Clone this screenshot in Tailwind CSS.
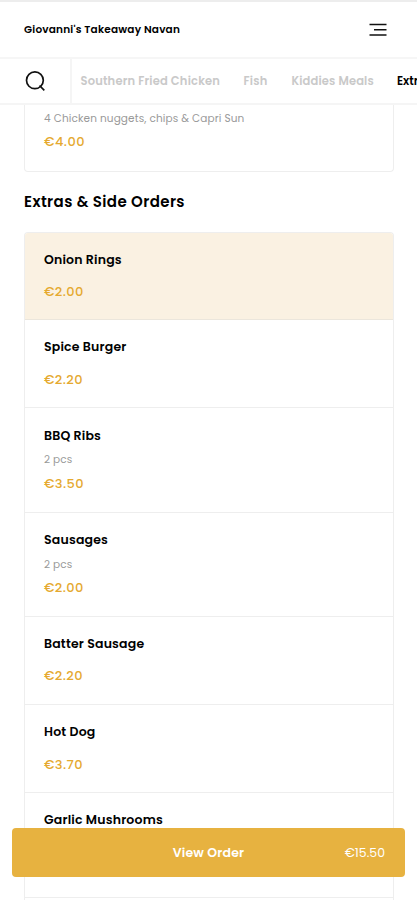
<!DOCTYPE html>
<html lang="en">
<head>
<meta charset="utf-8">
<meta name="viewport" content="width=device-width, initial-scale=1">
<title>Giovanni's Takeaway Navan</title>
<script src="https://cdn.jsdelivr.net/npm/@tailwindcss/browser@4"></script>
</head>
<body class="h-[900px] overflow-hidden bg-white font-[Poppins,Inter,sans-serif] text-black">
<div class="flex h-[900px] flex-col overflow-hidden">
  <header class="flex h-[59px] shrink-0 items-center justify-between border-t-2 border-b-2 border-t-[#ededed] border-b-[#f6f6f6] pr-[30px] pl-6">
    <h1 class="text-[10.5px] leading-4 font-semibold tracking-[0.2px] whitespace-nowrap"><span>Giovanni's Takeaway Navan</span></h1>
    <svg class="h-[14px] w-[18px]" viewBox="0 0 18 14" fill="none" stroke="#111" stroke-width="1.6"><path d="M0.5 1.5H17.5M5 6.8H17.5M0.5 12H17.5"/></svg>
  </header>
  <nav class="flex h-[46px] shrink-0 border-b-2 border-[#f5f5f5]">
    <div class="flex w-[72px] shrink-0 items-center border-r-2 border-[#f5f5f5] pl-[25px]">
      <svg class="h-5 w-5" viewBox="0 0 20 20" fill="none" stroke="#111" stroke-width="1.7"><circle cx="9.9" cy="9.3" r="8.4"/><path d="M14.5 14.5L19.3 19.3"/></svg>
    </div>
    <div class="flex min-w-0 flex-1 items-center overflow-hidden pt-[2px] pl-[8.5px] text-[11.5px] font-semibold whitespace-nowrap text-[#c9c9c9]">
      <a class="w-[163px] shrink-0 tracking-[0.18px]">Southern Fried Chicken</a>
      <a class="w-12 shrink-0 tracking-[0.2px]">Fish</a>
      <a class="w-[105.5px] shrink-0 tracking-[0.15px]">Kiddies Meals</a>
      <a class="shrink-0 text-black">Extras &amp; Side Orders</a>
    </div>
  </nav>
  <main class="shrink-0 px-6">
    <section class="h-[67px] w-[370px] rounded-b-[4px] border border-t-0 border-[#eeeeee] pt-[6px] pl-[19px]">
      <p class="text-[10.5px] leading-4 tracking-[0.13px] text-[#999]"><span>4 Chicken nuggets, chips &amp; Capri Sun</span></p>
      <p class="mt-[5px] text-[13px] leading-5 font-medium tracking-[0.5px] text-[#e5a92f]"><span>€4.00</span></p>
    </section>
    <h2 class="mt-[18px] text-[15px] leading-6 font-semibold tracking-[0.4px]"><span>Extras &amp; Side Orders</span></h2>
    <ul class="mt-[18px] w-[370px] rounded-t-[4px] border border-b-0 border-[#eeeeee]">
      <li class="h-[87px] rounded-t-[3px] border-b border-[#ebe6dc] bg-[#faf1e2] pt-[17px] pl-[19px]">
        <h3 class="text-[12.5px] leading-5 font-semibold tracking-[0.18px]"><span>Onion Rings</span></h3>
        <p class="mt-3 text-[13px] leading-5 font-medium tracking-[0.4px] text-[#e5a92f]"><span>€2.00</span></p>
      </li>
      <li class="h-[88px] border-b border-[#eeeeee] pt-[17px] pl-[19px]">
        <h3 class="text-[12.5px] leading-5 font-semibold tracking-[0.18px]"><span>Spice Burger</span></h3>
        <p class="mt-[13px] text-[13px] leading-5 font-medium tracking-[0.4px] text-[#e5a92f]"><span>€2.20</span></p>
      </li>
      <li class="h-[105px] border-b border-[#eeeeee] pt-[18px] pl-[19px]">
        <h3 class="text-[12.5px] leading-5 font-semibold tracking-[0.18px]"><span>BBQ Ribs</span></h3>
        <p class="mt-[6px] text-[10.5px] leading-4 tracking-[0.13px] text-[#999]"><span>2 pcs</span></p>
        <p class="mt-[6px] text-[13px] leading-5 font-medium tracking-[0.4px] text-[#e5a92f]"><span>€3.50</span></p>
      </li>
      <li class="h-[104px] border-b border-[#eeeeee] pt-[17px] pl-[19px]">
        <h3 class="text-[12.5px] leading-5 font-semibold tracking-[0.18px]"><span>Sausages</span></h3>
        <p class="mt-[7px] text-[10.5px] leading-4 tracking-[0.13px] text-[#999]"><span>2 pcs</span></p>
        <p class="mt-[5px] text-[13px] leading-5 font-medium tracking-[0.4px] text-[#e5a92f]"><span>€2.00</span></p>
      </li>
      <li class="h-[88px] border-b border-[#eeeeee] pt-[17px] pl-[19px]">
        <h3 class="text-[12.5px] leading-5 font-semibold tracking-[0.18px]"><span>Batter Sausage</span></h3>
        <p class="mt-3 text-[13px] leading-5 font-medium tracking-[0.4px] text-[#e5a92f]"><span>€2.20</span></p>
      </li>
      <li class="h-[88px] border-b border-[#eeeeee] pt-[17px] pl-[19px]">
        <h3 class="text-[12.5px] leading-5 font-semibold tracking-[0.18px]"><span>Hot Dog</span></h3>
        <p class="mt-[13px] text-[13px] leading-5 font-medium tracking-[0.4px] text-[#e5a92f]"><span>€3.70</span></p>
      </li>
      <li class="h-[105px] border-b border-[#eeeeee] pt-[17px] pl-[19px]">
        <h3 class="text-[12.5px] leading-5 font-semibold tracking-[0.18px]"><span>Garlic Mushrooms</span></h3>
      </li>
      <li class="h-[88px]"></li>
    </ul>
  </main>
</div>
<button class="fixed top-[828px] left-3 grid h-[49px] w-[393px] grid-cols-[1fr_auto_1fr] items-center rounded-[4px] bg-[#e7b240] px-5 text-white">
  <span></span>
  <span class="text-[12.5px] leading-5 font-semibold tracking-[0.2px]">View Order</span>
  <span class="text-right text-[12.5px] leading-5">€15.50</span>
</button>
</body>
</html>
